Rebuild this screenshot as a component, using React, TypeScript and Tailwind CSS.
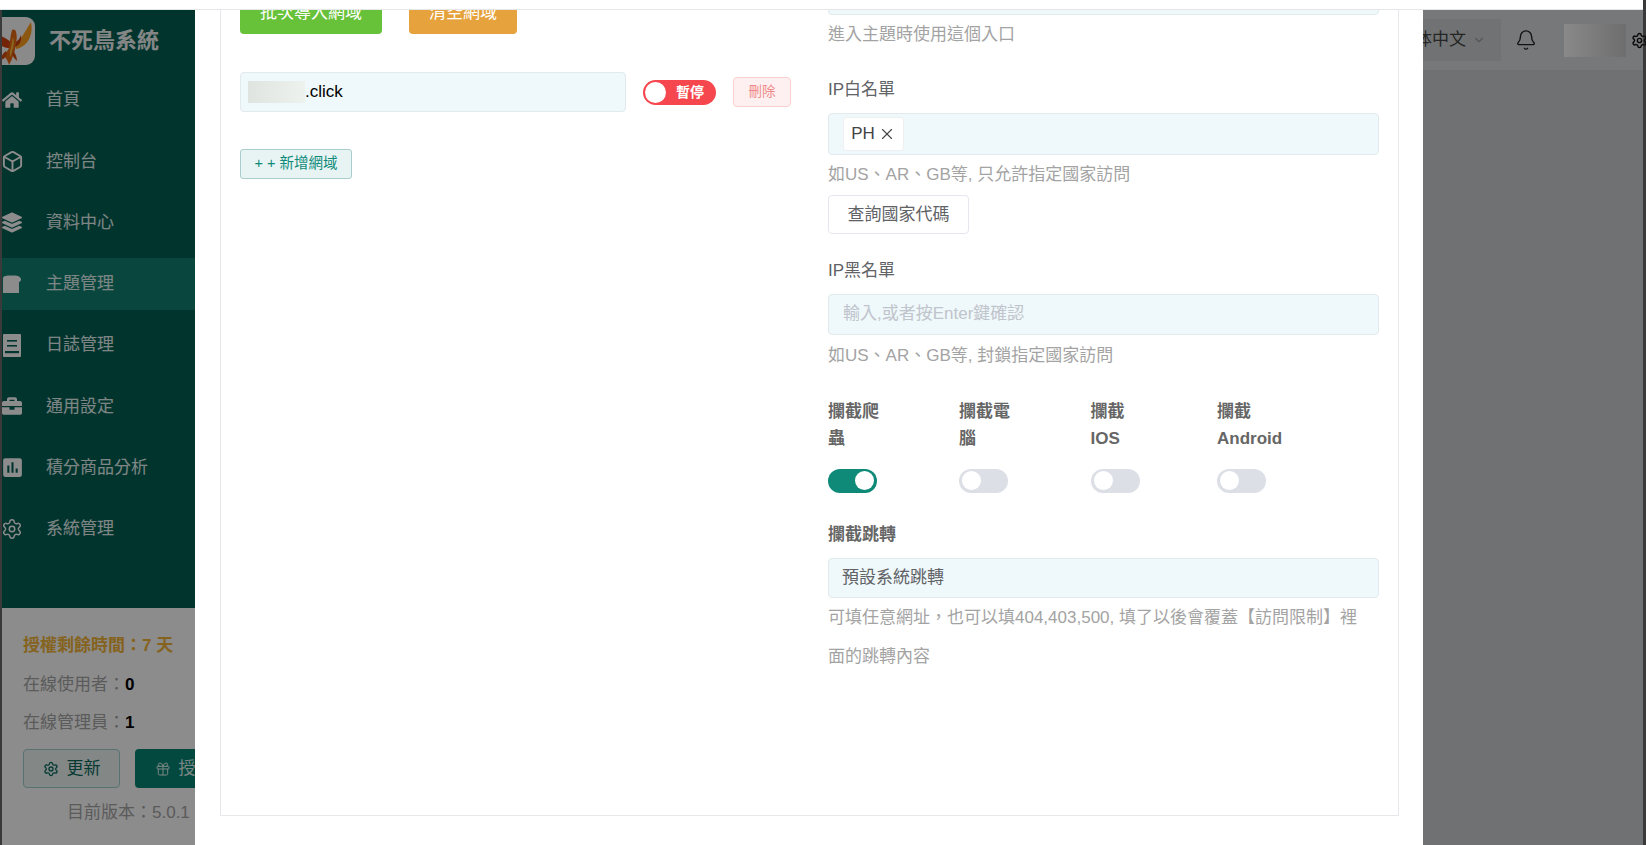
import { Bell, Box, ChevronDown, Gift, Settings, X } from 'lucide-react';
import { FaBriefcase, FaHome, FaLayerGroup } from 'react-icons/fa';
import { MdInsertChart } from 'react-icons/md';

function BreadIcon() {
  return (
    <svg viewBox="0 0 20 20" className="w-[20px] h-[20px]" fill="currentColor">
      <path d="M1 4c0-1.500 2-2.500 6-2.500h5c4 0 7 1.500 7 4 0 1.300-.8 2.200-2 2.500V19H1z" />
    </svg>
  );
}

function BookIcon() {
  return (
    <svg viewBox="0 0 20 23" className="w-[20px] h-[23px]">
      <rect x="1" y="0" width="18" height="23" rx="1" fill="currentColor" />
      <rect x="5" y="6" width="10" height="1.600" fill="#056055" />
      <rect x="5" y="11" width="10" height="1.600" fill="#056055" />
      <rect x="3" y="17" width="14" height="2.200" fill="#056055" />
    </svg>
  );
}

function Phoenix() {
  return (
    <svg viewBox="0 0 48 48" className="w-[48px] h-[48px]">
      <path d="M26 25c3-1 6-3 8-7 2-3 4-7 8-13 1 5 1 10-1 15-2 6-8 11-14 12z" fill="#ffa020" />
      <path d="M25 26c3-1 5-3 7-8 1 5-1 10-6 12z" fill="#c8420f" />
      <path d="M22 25C19 23 17 21 14 20 10 18 7 16 3 15c1 6 4 10 8 13 3 2 7 3 10 3z" fill="#d2420f" />
      <path d="M23 13c2-1 4 0 4 2 1 3 1 7 0 11-1 5-1 9-3 13-1 3-2 5-4 9-1-4-3-7-5-9 1-3 4-5 5-8 1-5 1-11 3-18z" fill="#e86a12" />
      <path d="M24 20c1 3 1 7 0 11-1 3-2 6-2 9-2-3-1-6 0-9 1-4 1-8 2-11z" fill="#ffc040" />
      <path d="M17 34c-3 2-5 5-5 9 3-1 5-3 6-6zM25 35c2 3 3 6 3 9-2-2-4-4-5-7z" fill="#d24e0c" />
    </svg>
  );
}

const menus = [
  { name: '首頁', icon: <FaHome size={20} /> },
  { name: '控制台', icon: <Box size={23} strokeWidth={2} className="shrink-0" /> },
  { name: '資料中心', icon: <FaLayerGroup size={21} /> },
  { name: '主題管理', icon: <BreadIcon />, active: true },
  { name: '日誌管理', icon: <BookIcon /> },
  { name: '通用設定', icon: <FaBriefcase size={20} /> },
  { name: '積分商品分析', icon: <MdInsertChart size={25} className="shrink-0" /> },
  { name: '系統管理', icon: <Settings size={22} strokeWidth={1.600} className="shrink-0" /> },
];

function Sidebar() {
  return (
    <aside className="w-[193px] shrink-0 flex flex-col bg-[#056055] overflow-hidden">
      <div className="h-[64px] flex items-center">
        <div className="w-[33px] h-[48px] mb-[3px] flex justify-end overflow-hidden rounded-r-[9px] bg-[#fbfbfb] shrink-0">
          <div className="shrink-0 -mr-[2px]">
            <Phoenix />
          </div>
        </div>
        <span className="ml-[14px] mb-[3px] text-[22px] font-bold text-[#f0f5f4] whitespace-nowrap">不死鳥系統</span>
      </div>
      <nav className="flex flex-col gap-[9.250px]">
        {menus.map((menu) => (
          <div
            key={menu.name}
            className={`h-[52px] flex items-center text-white ${menu.active ? 'bg-[#128272]' : ''}`}
          >
            <span className="w-[20px] flex justify-center">{menu.icon}</span>
            <span className="ml-[24px] text-[17px] text-[#e6f5f2]">{menu.name}</span>
          </div>
        ))}
      </nav>
      <div className="mt-auto h-[237px] bg-white pl-[21px] pt-[19px] text-[17px] text-[#a6a6a6] whitespace-nowrap">
        <div className="h-[38px] flex items-center font-bold text-[#f2b537]">授權剩餘時間：7 天</div>
        <div className="h-[39px] flex items-center">
          在線使用者：<b className="text-black">0</b>
        </div>
        <div className="h-[38px] flex items-center">
          在線管理員：<b className="text-black">1</b>
        </div>
        <div className="flex mt-[7px]">
          <button className="w-[97px] h-[39px] shrink-0 flex items-center justify-center gap-[8px] rounded-[4px] border border-[#9fcfca] bg-[#eef7f6] text-[#0b6b5e]">
            <Settings size={16} />
            更新
          </button>
          <button className="w-[97px] h-[39px] ml-[15px] shrink-0 flex items-center justify-center gap-[8px] rounded-[4px] bg-[#068674] text-[#dff5f0]">
            <Gift size={16} strokeWidth={1.500} />
            授權
          </button>
        </div>
        <div className="mt-[9px] ml-[44px] h-[32px] flex items-center">目前版本：5.0.1</div>
      </div>
    </aside>
  );
}

function Header() {
  return (
    <header className="h-[60px] bg-[#d8dbdd] flex items-center justify-end text-[#333]">
      <div className="h-[42px] flex items-center bg-[#cdd0d2] px-[15px] text-[17px] text-[#444]">
        简体中文
        <ChevronDown size={14} className="ml-[6px] text-[#9a9a9a]" />
      </div>
      <Bell size={22} strokeWidth={1.500} className="ml-[14px] text-[#222]" />
      <div className="ml-[27px] w-[62px] h-[33px] bg-gradient-to-r from-[#fafafa] to-[#c8c8c8]" />
      <Settings size={17} className="ml-[5px] -mr-[5px] text-[#111]" />
    </header>
  );
}

function Hint({ children, className = '' }: { children: React.ReactNode; className?: string }) {
  return <p className={`text-[17px] leading-[39px] text-[#a3a3a3] ${className}`}>{children}</p>;
}

function Field({ children, className = '' }: { children?: React.ReactNode; className?: string }) {
  return (
    <div className={`flex items-center rounded-[4px] border border-[#e2eaec] bg-[#eff8fa] text-[17px] ${className}`}>
      {children}
    </div>
  );
}

const blocks = [
  { label: '攔截爬蟲', on: true, width: 'w-[131px]' },
  { label: '攔截電腦', width: 'w-[131.500px]' },
  { label: '攔截 IOS', width: 'w-[126.500px]' },
  { label: '攔截 Android', width: 'w-[100px]' },
];

function Modal() {
  return (
    <div className="absolute left-[193px] top-0 bottom-0 w-[1228px] bg-white pl-[25px] pr-[24px] pb-[29px] flex">
      <div className="flex-1 flex border-x border-b border-[#e6e8eb] overflow-hidden">
        <div className="w-[607px] shrink-0 pl-[19px] -mt-[18px]">
          <div className="flex">
            <button className="w-[142px] h-[42px] rounded-[4px] bg-[#67c23a] text-[17px] text-white">批次導入網域</button>
            <button className="w-[108px] h-[42px] ml-[27px] rounded-[4px] bg-[#e6a23c] text-[17px] text-white">清空網域</button>
          </div>
          <div className="flex items-center mt-[38px]">
            <Field className="w-[386px] h-[40px] pl-[7px]">
              <span className="w-[57px] h-[22px] bg-gradient-to-r from-[#dfe4e1] to-[#edf2ef]" />
              <span className="text-black">.click</span>
            </Field>
            <div className="ml-[17px] w-[73px] h-[25px] rounded-full bg-[#f5474d] flex items-center pl-[2px]">
              <span className="w-[21px] h-[21px] rounded-full bg-white" />
              <span className="ml-[10px] text-[14px] font-bold text-white">暫停</span>
            </div>
            <button className="ml-[17px] w-[58px] h-[30px] rounded-[4px] border border-[#fbd0d0] bg-[#fef0f0] text-[13.500px] text-[#f08a8a]">
              刪除
            </button>
          </div>
          <button className="mt-[37px] w-[112px] h-[30px] rounded-[3px] border border-[#a8cfcb] bg-[#e7f4f3] text-[14.500px] text-[#0e8a7a]">
            + + 新增網域
          </button>
        </div>
        <div className="w-[551px] shrink-0 -mt-[36px] text-[#606266]">
          <Field className="h-[41px]" />
          <Hint>進入主題時使用這個入口</Hint>
          <div className="mt-[16px] text-[17px] leading-[39px]">IP白名單</div>
          <Field className="mt-[4px] h-[42px] pl-[14px]">
            <span className="h-[34px] w-[61px] flex items-center justify-center gap-[3px] rounded-[3px] border border-[#eef0f2] bg-white text-[#444]">
              PH <X size={18} strokeWidth={1.500} />
            </span>
          </Field>
          <Hint>如US、AR、GB等, 只允許指定國家訪問</Hint>
          <button className="w-[141px] h-[39px] mt-[1px] rounded-[4px] border border-[#e4e7ed] bg-white text-[17px]">
            查詢國家代碼
          </button>
          <div className="mt-[17px] text-[17px] leading-[39px]">IP黑名單</div>
          <Field className="mt-[3.500px] h-[41px] pl-[14px] text-[#c0c4cc]">輸入,或者按Enter鍵確認</Field>
          <Hint className="mt-[1px]">如US、AR、GB等, 封鎖指定國家訪問</Hint>
          <div className="flex mt-[23px]">
            {blocks.map((block) => (
              <div key={block.label} className={block.width}>
                <div className="w-[66px] h-[54px] text-[17px] font-bold leading-[27px] text-[#666]">{block.label}</div>
                <div
                  className={`mt-[17px] w-[49px] h-[24px] rounded-full flex items-center px-[3px] ${block.on ? 'bg-[#0f8a78] justify-end' : 'bg-[#dcdfe6]'}`}
                >
                  <span className="w-[19px] h-[19px] rounded-full bg-white" />
                </div>
              </div>
            ))}
          </div>
          <div className="mt-[22px] text-[17px] font-bold leading-[39px] text-[#666]">攔截跳轉</div>
          <Field className="mt-[4px] h-[40px] pl-[13px]">預設系統跳轉</Field>
          <Hint className="pr-[12px]">可填任意網址，也可以填404,403,500, 填了以後會覆蓋【訪問限制】裡面的跳轉內容</Hint>
        </div>
      </div>
    </div>
  );
}

export default function App() {
  return (
    <div className="w-[1646px] h-[845px] overflow-hidden flex flex-col bg-[#3a3a3a] font-['Liberation_Sans','Noto_Sans_CJK_TC',sans-serif]">
      <div className="h-[10px] shrink-0 mr-[3px] bg-white border-b border-[#e4e6e8]" />
      <div className="relative flex-1 min-h-0 flex ml-[2px] mr-[3px]">
        <Sidebar />
        <main className="flex-1 bg-[#cbced1]">
          <Header />
        </main>
        <div className="absolute inset-0 bg-black/45" />
        <Modal />
      </div>
    </div>
  );
}
